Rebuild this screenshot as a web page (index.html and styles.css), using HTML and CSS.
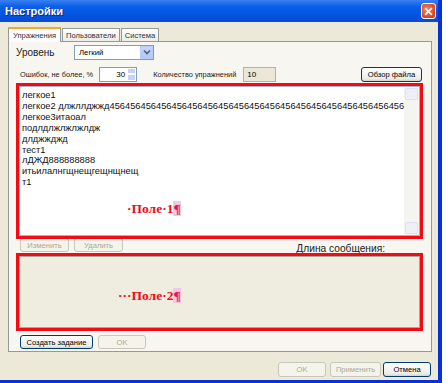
FILE: index.html
```html
<!DOCTYPE html>
<html lang="ru">
<head>
  <meta charset="UTF-8">
  <title>Настройки</title>
  <link rel="stylesheet" href="styles.css">
</head>
<body>
  <div class="window">
    <div class="titlebar">
      <span class="title">Настройки</span>
      <span class="close-btn">
        <svg width="14" height="14" viewBox="0 0 14 14"><path d="M3.5 3.5 L10.5 10.5 M10.5 3.5 L3.5 10.5" stroke="#fff" stroke-width="2.2" stroke-linecap="square"/></svg>
      </span>
    </div>

    <div class="body">
      <div class="tabs">
        <div class="tab active">Упражнения</div>
        <div class="tab">Пользователи</div>
        <div class="tab">Система</div>
      </div>

      <div class="panel">
        <div class="row row-level">
          <span class="label-big">Уровень</span>
          <div class="select">
            <span>Легкий</span>
            <span class="drop">
              <svg width="8" height="6" viewBox="0 0 8 6"><path d="M1 1.5 L4 4.5 L7 1.5" stroke="#4d6185" stroke-width="1.6" fill="none"/></svg>
            </span>
          </div>
        </div>

        <div class="row row-opts">
          <span class="label-sm">Ошибок, не более, %</span>
          <div class="spin">
            <span class="spin-val">30</span>
            <span class="spin-btns"><i></i><i></i></span>
          </div>
          <span class="label-sm count-label">Количество упражнений</span>
          <div class="ro-input">10</div>
          <button class="btn browse">Обзор файла</button>
        </div>

        <div class="mark field1">
          <div class="memo">
            <div class="memo-text">легкое1
легкое2 длжллджжд456456456456456456456456456456456456456456456456456456456456456
легкое3итаоал
подлдлжлжлжлдж
длджжджд
тест1
лДЖД888888888
итьилалнгщнещгещнщнещ
т1</div>
            <div class="vscroll"><span class="arr up"></span><span class="arr down"></span></div>
          </div>
          <span class="note note1">·Поле·1<b>¶</b></span>
        </div>

        <div class="row row-edit">
          <button class="btn disabled">Изменить</button>
          <button class="btn disabled">Удалить</button>
          <span class="len-label">Длина сообщения:</span>
        </div>

        <div class="mark field2">
          <div class="memo2"></div>
          <span class="note note2">···Поле·2<b>¶</b></span>
        </div>

        <div class="row row-create">
          <button class="btn create">Создать задание</button>
          <button class="btn disabled ok-small">OK</button>
        </div>
      </div>

      <div class="footer">
        <button class="btn disabled">OK</button>
        <button class="btn disabled">Применить</button>
        <button class="btn">Отмена</button>
      </div>
    </div>
  </div>
</body>
</html>
```

FILE: styles.css
```css
* {
  margin: 0;
  padding: 0;
  box-sizing: border-box;
}

body {
  background: #fff;
  font-family: "Liberation Sans", Arial, sans-serif;
  color: #000;
  width: 446px;
  height: 383px;
  overflow: hidden;
}

.window {
  width: 442px;
  height: 383px;
  background: #ece9d8;
  border-right: 4px solid #0831d9;
  border-bottom: 3px solid #0831d9;
  display: flex;
  flex-direction: column;
}

.titlebar {
  height: 22px;
  flex: none;
  background: linear-gradient(to bottom, #3a80f3 0%, #0a5ee8 30%, #0353e0 70%, #0a4bd0 100%);
  display: flex;
  align-items: center;
  justify-content: space-between;
  padding: 0 2px 0 5px;
}

.title {
  color: #fff;
  font-weight: bold;
  font-size: 11px;
  text-shadow: 1px 1px 0 #0a2a8a;
}

.close-btn {
  width: 15px;
  height: 16px;
  background: radial-gradient(circle at 40% 40%, #f08a6a, #d9441e 70%);
  border: 1px solid #fff;
  border-radius: 3px;
  display: flex;
  align-items: center;
  justify-content: center;
}

.close-btn svg {
  width: 11px;
  height: 11px;
}

.body {
  flex: 1;
  display: flex;
  flex-direction: column;
  padding: 5px 6px 0 8px;
}

.tabs {
  display: flex;
  height: 14px;
  font-size: 7.6px;
  align-items: flex-end;
}

.tab {
  height: 13px;
  padding: 2px 3px 0;
  border: 1px solid #919b9c;
  border-bottom: none;
  background: linear-gradient(#fff, #ecebe5);
  color: #333;
  margin-right: 1px;
  line-height: 10px;
  white-space: nowrap;
}

.tab.active {
  height: 15px;
  margin-bottom: -1px;
  padding-left: 4px;
  padding-right: 4px;
  border-top: 2px solid #f0a937;
  background: #fcfcfe;
  position: relative;
  z-index: 1;
}

.panel {
  height: 311px;
  border: 1px solid #919b9c;
  background: #f7f6f0;
  padding: 1px 8px 0 7px;
  display: flex;
  flex-direction: column;
}

.row {
  display: flex;
  align-items: center;
}

.row-level {
  height: 16px;
  margin-top: 1px;
}

.label-big {
  font-size: 10px;
  color: #222;
  width: 58px;
}

.select {
  width: 80px;
  height: 15px;
  border: 1px solid #7f9db9;
  background: #fff;
  display: flex;
  align-items: center;
  justify-content: space-between;
  font-size: 7.8px;
  padding-left: 4px;
}

.drop {
  width: 13px;
  height: 13px;
  background: linear-gradient(#c6d5fb, #b2c8f7);
  border: 1px solid #b9cbf6;
  display: flex;
  align-items: center;
  justify-content: center;
}

.row-opts {
  height: 16px;
  margin-top: 6px;
  padding-left: 4px;
}

.label-sm {
  font-size: 7.4px;
  color: #222;
  white-space: nowrap;
}

.spin {
  margin-left: 6px;
  width: 38px;
  height: 15px;
  border: 1px solid #7f9db9;
  background: #fff;
  display: flex;
  justify-content: flex-end;
  font-size: 8px;
}

.spin-val {
  padding: 2px 2px 0 0;
}

.spin-btns {
  width: 9px;
  display: flex;
  flex-direction: column;
}

.spin-btns i {
  flex: 1;
  background: #c3d3fa;
  border: 1px solid #fff;
}

.count-label {
  margin-left: 16px;
}

.ro-input {
  margin-left: 7px;
  width: 33px;
  height: 15px;
  border: 1px solid #a8b3c3;
  background: #ebe8d7;
  font-size: 8px;
  padding: 2px 3px;
}

.btn {
  font-family: "Liberation Sans", Arial, sans-serif;
  font-size: 7.6px;
  height: 14px;
  padding: 0 4px;
  border: 1px solid #003c74;
  border-radius: 3px;
  background: linear-gradient(#fff, #ecebe6 85%, #d6d0c5);
  color: #000;
  white-space: nowrap;
}

.btn.disabled {
  border-color: #c9c7ba;
  color: #aca899;
  background: #f5f4ea;
}

.browse {
  margin-left: auto;
  width: 61px;
  height: 15px;
  margin-right: 1px;
}

.mark {
  border: 3px solid #f30b14;
  position: relative;
}

.field1 {
  margin-top: 1px;
  height: 156px;
}

.memo {
  height: 100%;
  background: #fff;
  border: 1px solid #9bb7d8;
  display: flex;
  overflow: hidden;
}

.memo-text {
  flex: 1;
  white-space: pre;
  overflow: hidden;
  font-size: 9.3px;
  line-height: 10.9px;
  color: #111;
  padding: 3px 0 0 2px;
}

.vscroll {
  width: 15px;
  flex: none;
  background: #f4f4f0;
  display: flex;
  flex-direction: column;
  justify-content: space-between;
  padding: 1px 1px;
}

.arr {
  height: 12px;
  background: #eef0f6;
  border: 1px solid #dde2ee;
  border-radius: 2px;
}

.note {
  position: absolute;
  font-family: "Liberation Serif", "Times New Roman", serif;
  font-weight: bold;
  font-size: 13.5px;
  color: #f30b14;
}

.note b {
  color: #e31560;
  background: #f3c6e3;
}

.note1 {
  left: 108px;
  top: 115px;
}

.note2 {
  left: 99px;
  top: 32px;
}

.row-edit {
  height: 14px;
  margin-top: -1px;
  gap: 5px;
  padding-left: 4px;
}

.row-edit .btn {
  width: 49px;
}

.len-label {
  margin-left: auto;
  margin-right: 38px;
  margin-top: 6px;
  font-size: 10.2px;
  color: #222;
}

.field2 {
  margin-top: 1px;
  height: 78px;
}

.memo2 {
  height: 100%;
  border: 1px solid #a5a9a5;
  background: #efede0;
}

.row-create {
  height: 14px;
  margin-top: 4px;
  gap: 5px;
  padding-left: 4px;
}

.create {
  width: 73px;
  padding: 0;
}

.ok-small {
  width: 48px;
}

.footer {
  display: flex;
  justify-content: flex-end;
  gap: 4px;
  margin-top: 10px;
  padding-right: 1px;
}

.footer .btn {
  width: 48px;
  height: 15px;
}

.footer .btn:nth-child(2) {
  width: 51px;
  margin-right: -2px;
}
```
